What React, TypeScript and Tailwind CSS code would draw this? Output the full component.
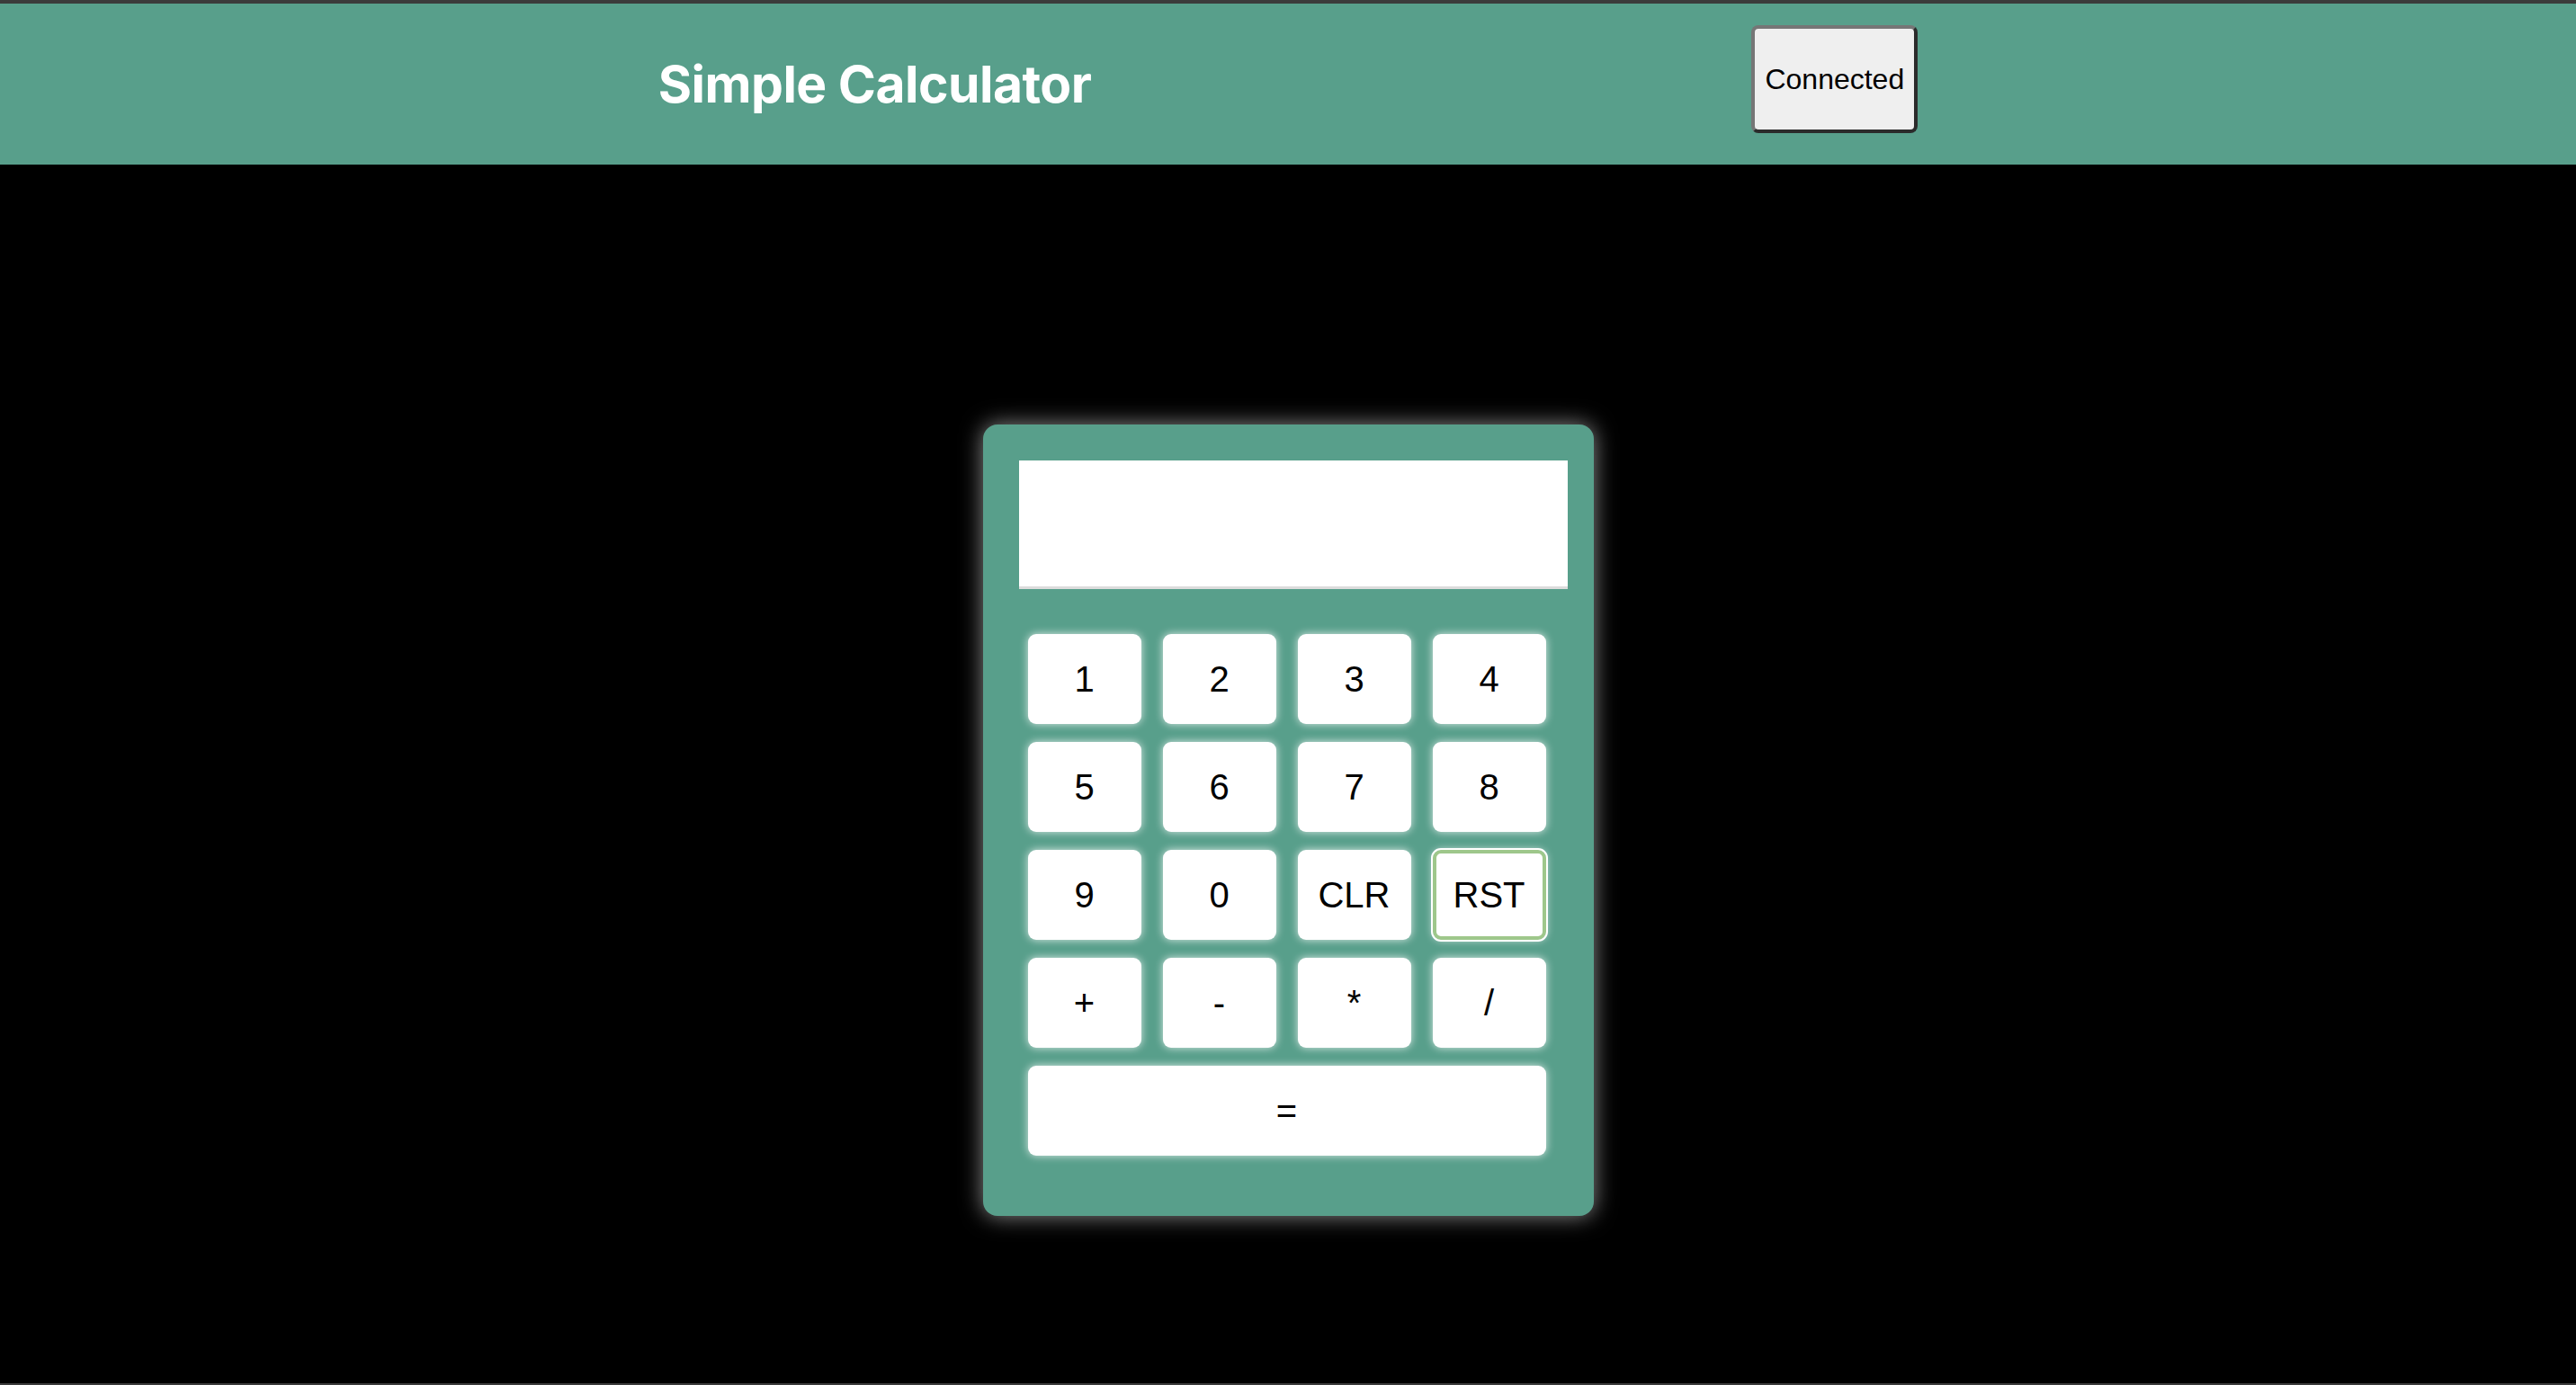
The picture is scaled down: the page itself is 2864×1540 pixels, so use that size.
import React from "react";

const keys = ["1", "2", "3", "4", "5", "6", "7", "8", "9", "0", "CLR", "RST", "+", "-", "*", "/"];

export default function App() {
  return (
    <div className="h-screen flex flex-col bg-black border-t-4 border-b-2 border-[#3b3b3b]">
      <header className="h-[179px] shrink-0 bg-[#589f8b] flex items-center justify-evenly">
        <h1 className="w-[484px] whitespace-nowrap text-white font-bold text-[57px] leading-none tracking-[-0.5px] font-['Inter',sans-serif]">
          Simple Calculator
        </h1>
        <button className="mb-[11px] w-[185px] h-[120px] rounded-[8px] bg-[#efefef] border-4 border-t-[#767676] border-l-[#767676] border-r-[#2b2b2b] border-b-[#2b2b2b] text-black text-[32px] font-['Liberation_Sans',Arial,sans-serif] flex items-center justify-center">
          Connected
        </button>
      </header>
      <main className="flex-1 flex justify-center pt-[289px]">
        <div className="w-[679px] h-[880px] rounded-[16px] bg-[#589f8b] shadow-[0_0_24px_rgba(255,255,255,0.55)] pt-[40px]">
          <div className="ml-[40px] w-[610px] h-[143px] bg-white border-b-[3px] border-[#dcdcdc]" />
          <div className="mt-[50px] ml-[50px] w-[576px] grid grid-cols-4 gap-x-[24px] gap-y-[20px]">
            {keys.map((k) => (
              <button
                key={k}
                className={
                  k === "RST"
                    ? "h-[100px] rounded-[9px] bg-white border-4 border-[#9ec78b] outline-2 outline-white shadow-[0_0_10px_rgba(255,255,255,0.8)] text-black text-[40px] font-['Liberation_Sans',Arial,sans-serif] flex items-center justify-center"
                    : "h-[100px] rounded-[9px] bg-white shadow-[0_0_10px_rgba(255,255,255,0.8)] text-black text-[40px] font-['Liberation_Sans',Arial,sans-serif] flex items-center justify-center"
                }
              >
                {k}
              </button>
            ))}
            <button className="col-span-4 h-[100px] rounded-[9px] bg-white shadow-[0_0_10px_rgba(255,255,255,0.8)] text-black text-[40px] font-['Liberation_Sans',Arial,sans-serif] flex items-center justify-center">
              =
            </button>
          </div>
        </div>
      </main>
    </div>
  );
}
